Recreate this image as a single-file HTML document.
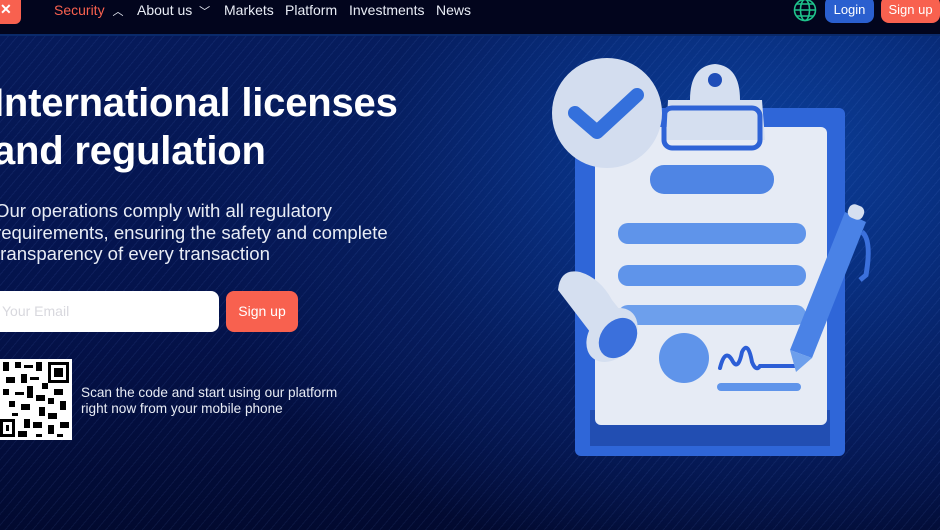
<!DOCTYPE html>
<html><head><meta charset="utf-8"><style>
*{margin:0;padding:0;box-sizing:border-box}
body{width:940px;height:530px;overflow:hidden;font-family:"Liberation Sans",sans-serif;background:#03082a;position:relative}
.nav{position:absolute;top:0;left:0;width:940px;height:36px;background:#02051d;border-bottom:2px solid #0a2a6a}
.hero{position:absolute;top:36px;left:0;width:940px;height:494px;
background:radial-gradient(ellipse 600px 420px at 760px 120px,#0c3f9a 0%,#082e7e 35%,#061d5e 65%,rgba(4,14,60,0) 100%),
linear-gradient(180deg,#061a5a 0%,#04124a 60%,#020a30 100%);}
.lines{position:absolute;inset:0;background:repeating-linear-gradient(130deg,rgba(255,255,255,0) 0 6px,rgba(120,160,255,.08) 6px 7px)}
.nav a{position:absolute;top:2px;color:#e8ecf5;font-size:14px;text-decoration:none}
h1{position:absolute;left:-7px;top:79px;color:#fff;font-size:40px;line-height:48px;font-weight:bold;letter-spacing:-.2px}
p.d{position:absolute;left:-5px;top:200px;color:#e8ecf5;font-size:18.6px;line-height:21.7px}
.inp{position:absolute;left:-10px;top:291px;width:229px;height:41px;background:#fff;border-radius:8px;color:#d8d8de;font-size:14px;padding:12px 0 0 12px}
.btn{position:absolute;background:#f8614f;color:#fff;border-radius:8px;text-align:center}
.qr{position:absolute;left:0;top:359px;width:72px;height:81px;background:#fff}
.scan{position:absolute;left:81px;top:385px;color:#e8ecf5;font-size:13.6px;line-height:15.5px}
</style></head><body>
<div class="nav">
<div style="position:absolute;left:-6px;top:-6px;width:27px;height:30px;background:#f8614f;border-radius:6px"></div>
<div style="position:absolute;left:0;top:2px;width:14px;height:14px;color:#fff;font-weight:bold;font-size:14px;line-height:14px">✕</div>
<a style="left:54px;color:#f8614f">Security <span style="color:#e8ecf5;font-size:11px;margin-left:4px">︿</span></a>
<a style="left:137px">About us <span style="font-size:11px;margin-left:3px">﹀</span></a>
<a style="left:224px">Markets</a>
<a style="left:285px">Platform</a>
<a style="left:349px">Investments</a>
<a style="left:436px">News</a>
<svg style="position:absolute;left:793px;top:-2px" width="24" height="24" viewBox="0 0 24 24" fill="none" stroke="#1fc38c" stroke-width="1.6"><circle cx="12" cy="12" r="10.5"/><ellipse cx="12" cy="12" rx="4.5" ry="10.5"/><path d="M1.5 12h21M3.5 6h17M3.5 18h17"/></svg>
<div class="btn" style="left:825px;top:-4px;width:49px;height:27px;background:#2a5fcf;font-size:13px;line-height:28px">Login</div>
<div class="btn" style="left:881px;top:-4px;width:59px;height:27px;font-size:13px;line-height:28px">Sign up</div>
</div>
<div class="hero"><div class="lines"></div></div>
<h1>International licenses<br>and regulation</h1>
<p class="d">Our operations comply with all regulatory<br>requirements, ensuring the safety and complete<br>transparency of every transaction</p>
<div class="inp">Your Email</div>
<div class="btn" style="left:226px;top:291px;width:72px;height:41px;font-size:14px;line-height:41px">Sign up</div>
<div class="qr"><svg width="72" height="81" viewBox="0 0 24 27" shape-rendering="crispEdges">
<g fill="#000"><rect x="16" y="1" width="7" height="7"/><rect x="17" y="2" width="5" height="5" fill="#fff"/><rect x="18" y="3" width="3" height="3"/>
<rect x="0" y="20" width="5" height="6"/><rect x="1" y="1" width="2" height="3"/><rect x="5" y="1" width="2" height="2"/><rect x="8" y="2" width="3" height="1"/><rect x="12" y="1" width="2" height="3"/><rect x="2" y="6" width="3" height="2"/><rect x="7" y="5" width="2" height="3"/><rect x="10" y="6" width="3" height="1"/><rect x="14" y="8" width="2" height="2"/><rect x="18" y="10" width="3" height="2"/><rect x="1" y="10" width="2" height="2"/><rect x="5" y="11" width="3" height="1"/><rect x="9" y="9" width="2" height="4"/><rect x="12" y="12" width="3" height="2"/><rect x="20" y="14" width="2" height="3"/><rect x="3" y="14" width="2" height="2"/><rect x="7" y="15" width="3" height="2"/><rect x="13" y="16" width="2" height="3"/><rect x="16" y="18" width="3" height="2"/><rect x="8" y="20" width="2" height="3"/><rect x="11" y="21" width="3" height="2"/><rect x="16" y="22" width="2" height="3"/><rect x="20" y="21" width="3" height="2"/><rect x="6" y="24" width="3" height="2"/><rect x="12" y="25" width="2" height="1"/><rect x="19" y="25" width="2" height="1"/><rect x="16" y="13" width="2" height="2"/><rect x="4" y="18" width="2" height="1"/></g>
<rect x="1" y="21" width="3" height="4" fill="#fff"/><rect x="2" y="22" width="1" height="2" fill="#000"/></svg></div>
<div class="scan">Scan the code and start using our platform<br>right now from your mobile phone</div>

<svg style="position:absolute;left:540px;top:50px" width="340" height="420" viewBox="540 50 340 420">
<rect x="575" y="108" width="270" height="348" rx="6" fill="#2f66d8"/>
<rect x="590" y="410" width="240" height="36" fill="#1b3e9a" opacity=".6"/>
<rect x="595" y="127" width="232" height="298" rx="6" fill="#e6ebf5"/>
<path d="M668 100 L690 100 Q690 66 715 64 Q740 66 740 100 L762 100 L765 140 L666 140 Z" fill="#d5dff0"/>
<circle cx="715" cy="80" r="7" fill="#1e4db8"/>
<rect x="664" y="108" width="96" height="40" rx="8" fill="none" stroke="#2e63d6" stroke-width="5"/>
<circle cx="607" cy="113" r="55" fill="#d3ddef"/>
<path d="M575 113 L597 132 L637 95" fill="none" stroke="#3470dc" stroke-width="14" stroke-linejoin="round" stroke-linecap="round"/>
<rect x="650" y="165" width="124" height="29" rx="14" fill="#4f85e4"/>
<rect x="618" y="223" width="188" height="21" rx="10" fill="#5f94ea"/>
<rect x="618" y="265" width="188" height="21" rx="10" fill="#5f94ea"/>
<rect x="618" y="305" width="188" height="20" rx="10" fill="#6d9fec"/>
<circle cx="684" cy="358" r="25" fill="#5f94ea"/>
<path d="M720 368 Q725 348 732 360 Q738 372 742 352 Q748 340 752 362 Q756 372 760 366 L795 366" fill="none" stroke="#2c5ed6" stroke-width="4" stroke-linecap="round"/>
<rect x="717" y="383" width="84" height="8" rx="4" fill="#5f94ea"/>
<path d="M558 290 Q560 268 580 272 Q600 278 612 300 L628 320 L600 345 Z" fill="#d5dff0"/>
<ellipse cx="612" cy="335" rx="30" ry="22" transform="rotate(-50 612 335)" fill="#d5dff0"/>
<ellipse cx="618" cy="338" rx="22" ry="17" transform="rotate(-50 618 338)" fill="#3b70dc"/>
<path d="M845 212 L866 222 L812 358 L790 350 Z" fill="#4a82e6"/>
<path d="M790 350 L812 358 L796 372 Z" fill="#6d9fec"/>
<rect x="848" y="205" width="16" height="14" rx="6" fill="#d5dff0" transform="rotate(22 856 212)"/>
<path d="M862 232 Q872 240 866 275 L860 280" fill="none" stroke="#3b70dc" stroke-width="5"/>
</svg>
</body></html>
